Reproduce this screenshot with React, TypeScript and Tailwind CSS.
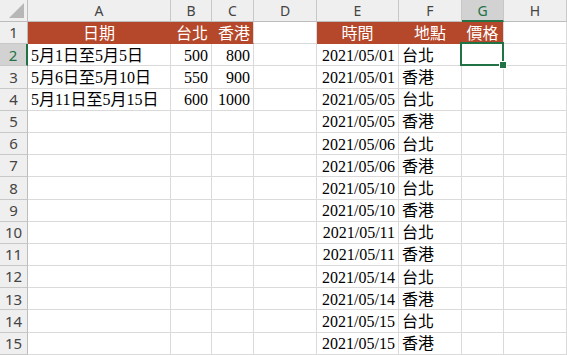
import React from 'react';

const cols = ['A', 'B', 'C', 'D', 'E', 'F', 'G', 'H'];

const leftRows = [
  {date: '5月1日至5月5日', tp: '500', hk: '800'},
  {date: '5月6日至5月10日', tp: '550', hk: '900'},
  {date: '5月11日至5月15日', tp: '600', hk: '1000'},
];

const rightRows = [
  ['2021/05/01', '台北'],
  ['2021/05/01', '香港'],
  ['2021/05/05', '台北'],
  ['2021/05/05', '香港'],
  ['2021/05/06', '台北'],
  ['2021/05/06', '香港'],
  ['2021/05/10', '台北'],
  ['2021/05/10', '香港'],
  ['2021/05/11', '台北'],
  ['2021/05/11', '香港'],
  ['2021/05/14', '台北'],
  ['2021/05/14', '香港'],
  ['2021/05/15', '台北'],
  ['2021/05/15', '香港'],
];

const cell =
  'flex items-center border-r border-b border-[#dadada] bg-white px-[3px] pt-[2px] overflow-hidden whitespace-nowrap';
const red =
  'flex items-center justify-center bg-[#b5472a] text-white border-b border-[#b5472a] pt-[2px] whitespace-nowrap';

function RowHeader({n}: {n: number}) {
  const selected = n === 2;
  return (
    <div
      className={
        'flex items-center justify-center border-b border-[#c8c8c8] text-[15px] ' +
        (selected
          ? 'bg-[#d2d2d2] text-[#217346] border-r-2 border-r-[#217346]'
          : 'bg-[#efefef] text-[#444] border-r border-r-[#bdbdbd]')
      }
      style={{fontFamily: '"Noto Sans", sans-serif'}}>
      {n}
    </div>
  );
}

export default function App() {
  return (
    <div
      className="grid h-[355px] w-[567px] overflow-hidden bg-white grid-cols-[28px_143px_41px_42px_63px_82px_63px_42px_1fr] grid-rows-[22px_repeat(15,22.2px)] text-[16px] text-black"
      style={{fontFamily: '"Liberation Serif", "Noto Sans CJK TC", serif'}}>
      {/* corner */}
      <div className="relative border-r border-b border-[#bdbdbd] bg-[#efefef]">
        <svg className="absolute right-[3px] bottom-[3px]" width="15" height="15">
          <polygon points="15,0 15,15 0,15" fill="#b7b7b7" />
        </svg>
      </div>
      {cols.map((c) => (
        <div
          key={c}
          className={
            'flex items-center justify-center border-r border-[#c8c8c8] text-[14px] ' +
            (c === 'G'
              ? 'bg-[#d2d2d2] text-[#217346] border-b-2 border-b-[#217346]'
              : 'bg-[#efefef] text-[#444] border-b border-b-[#bdbdbd]')
          }
          style={{fontFamily: '"Noto Sans", sans-serif'}}>
          {c}
        </div>
      ))}

      {/* row 1 */}
      <RowHeader n={1} />
      <div className={red + ' border-r border-r-[#b5472a]'}>日期</div>
      <div className={red + ' border-r border-r-[#b5472a] justify-end pr-[3px]'}>台北</div>
      <div className={red + ' border-r border-r-[#dadada] justify-end pr-[3px]'}>香港</div>
      <div className={cell} />
      <div className={red + ' border-r border-r-[#b5472a]'}>時間</div>
      <div className={red + ' border-r border-r-[#b5472a]'}>地點</div>
      <div className={red + ' border-r border-r-[#dadada]'}>價格</div>
      <div className={cell} />

      {rightRows.map((r, i) => {
        const n = i + 2;
        const l = leftRows[i];
        return (
          <React.Fragment key={n}>
            <RowHeader n={n} />
            <div className={cell}>{l ? l.date : ''}</div>
            <div className={cell + ' justify-end'}>{l ? l.tp : ''}</div>
            <div className={cell + ' justify-end'}>{l ? l.hk : ''}</div>
            <div className={cell} />
            <div className={cell + ' justify-end'}>{r[0]}</div>
            <div className={cell}>{r[1]}</div>
            <div className={cell + ' relative overflow-visible'}>
              {n === 2 && (
                <div className="absolute -top-[2px] -left-[2px] -right-[1px] -bottom-[1px] z-10 border-2 border-[#217346]">
                  <div className="absolute -right-[4px] -bottom-[4px] h-[6px] w-[6px] bg-[#217346] outline outline-1 outline-white" />
                </div>
              )}
            </div>
            <div className={cell} />
          </React.Fragment>
        );
      })}
    </div>
  );
}
